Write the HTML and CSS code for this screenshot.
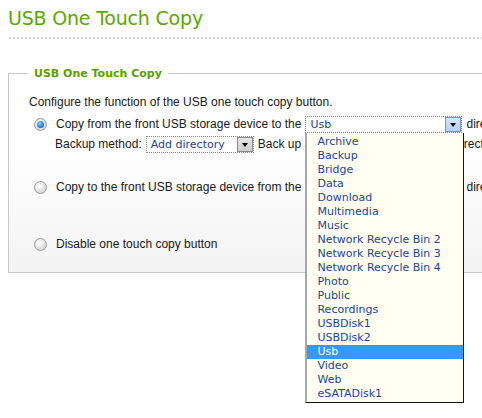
FILE: index.html
```html
<!DOCTYPE html>
<html>
<head>
<meta charset="utf-8">
<link rel="stylesheet" href="styles.css">
</head>
<body>
<div class="page">
  <h1 class="title">USB One Touch Copy</h1>
  <div class="divider"></div>
  <fieldset class="box">
    <legend class="legend">USB One Touch Copy</legend>
    <p class="intro">Configure the function of the USB one touch copy button.</p>

    <div class="option opt1">
      <div class="line">
        <span class="radio checked"></span>
        <span class="label">Copy from the front USB storage device to the</span>
        <span class="select sel-dir">
          <span class="sel-text">Usb</span>
          <span class="arrow blue"></span>
          <div class="list">
            <div class="item">Archive</div>
            <div class="item">Backup</div>
            <div class="item">Bridge</div>
            <div class="item">Data</div>
            <div class="item">Download</div>
            <div class="item">Multimedia</div>
            <div class="item">Music</div>
            <div class="item">Network Recycle Bin 2</div>
            <div class="item">Network Recycle Bin 3</div>
            <div class="item">Network Recycle Bin 4</div>
            <div class="item">Photo</div>
            <div class="item">Public</div>
            <div class="item">Recordings</div>
            <div class="item">USBDisk1</div>
            <div class="item">USBDisk2</div>
            <div class="item active">Usb</div>
            <div class="item">Video</div>
            <div class="item">Web</div>
            <div class="item">eSATADisk1</div>
          </div>
        </span>
        <span class="label">directory.</span>
      </div>
      <div class="line sub">
        <span class="label">Backup method:</span>
        <span class="select sel-method">
          <span class="sel-text">Add directory</span>
          <span class="arrow gray"></span>
        </span>
        <span class="label">Back up all files into the new backup directory.</span>
      </div>
    </div>

    <div class="option opt2">
      <div class="line">
        <span class="radio"></span>
        <span class="label">Copy to the front USB storage device from the</span>
        <span class="select sel-dir">
          <span class="sel-text">Usb</span>
          <span class="arrow blue"></span>
        </span>
        <span class="label">directory.</span>
      </div>
    </div>

    <div class="option opt3">
      <div class="line">
        <span class="radio"></span>
        <span class="label">Disable one touch copy button</span>
      </div>
    </div>
  </fieldset>
</div>
</body>
</html>
```

FILE: styles.css
```css
html {
  overflow: hidden;
  background: #fff;
}

body {
  margin: 0;
  padding: 0;
  background: #fff;
  min-height: 418px;
}

.page {
  width: 620px;
  padding: 5px 0 0 8px;
  font-family: "Liberation Sans", Arial, sans-serif;
  font-size: 12px;
  color: #1a1a1a;
}

.title {
  margin: 0;
  font-family: "DejaVu Sans", Verdana, sans-serif;
  font-weight: normal;
  font-size: 19px;
  line-height: 26px;
  color: #5da800;
  letter-spacing: -0.2px;
}

.divider {
  margin-top: 6px;
  height: 2px;
  width: 100%;
  background-image: radial-gradient(circle, #d2d2d2 0.9px, transparent 1.1px);
  background-size: 4px 2px;
}

.box {
  margin: 28px 0 0 0;
  padding: 15px 20px 18px 20px;
  border: 1px solid #c8c8c8;
  background: linear-gradient(#ffffff 35%, #f3f3f3);
  min-width: 0;
}

.legend {
  margin-left: -1px;
  padding: 0 6px;
  font-family: "DejaVu Sans", Tahoma, sans-serif;
  font-weight: bold;
  font-size: 11px;
  color: #5a9f00;
}

.intro {
  margin: 0 0 4px 0;
  line-height: 15px;
}

.line {
  display: flex;
  align-items: center;
  gap: 4px;
  white-space: nowrap;
  height: 20px;
}

.line .label {
  line-height: 15px;
}

.sub {
  padding-left: 26px;
}

.opt2 {
  margin-top: 23px;
}

.opt3 {
  margin-top: 37px;
}

.radio {
  display: inline-block;
  box-sizing: border-box;
  width: 13px;
  height: 13px;
  margin: 0 5px 0 5px;
  border-radius: 50%;
  border: 1px solid #9a9a9a;
  background: radial-gradient(circle at 40% 35%, #ffffff, #d8d8d8 70%, #c8c8c8);
  position: relative;
  flex: none;
}

.radio.checked::after {
  content: "";
  position: absolute;
  left: 2px;
  top: 2px;
  width: 7px;
  height: 7px;
  border-radius: 50%;
  background: radial-gradient(circle at 40% 35%, #8fd0ff, #2b86d8 55%, #0d4c96);
}

.select {
  position: relative;
  display: inline-flex;
  align-items: center;
  justify-content: space-between;
  box-sizing: border-box;
  height: 17px;
  border: 1px dotted #8a8a8a;
  background: #fff;
  font-family: "DejaVu Sans", Tahoma, sans-serif;
  font-size: 11px;
  color: #23449a;
  flex: none;
}

.sel-text {
  padding-left: 4px;
  line-height: 15px;
}

.sel-dir {
  width: 157px;
}

.sel-method {
  width: 108px;
}

.arrow {
  position: relative;
  box-sizing: border-box;
  width: 16px;
  height: 15px;
  flex: none;
}

.arrow::after {
  content: "";
  position: absolute;
  left: 4px;
  top: 5px;
  border-left: 3.5px solid transparent;
  border-right: 3.5px solid transparent;
  border-top: 4px solid #000;
}

.arrow.blue {
  border: 1px solid #6f98c8;
  background: linear-gradient(#d6e6f8, #b6d0f0);
}

.arrow.gray {
  border: 1px solid #8c8c8c;
  background: linear-gradient(#e4e4e4, #cfcfcf);
}

.list {
  position: absolute;
  left: -1px;
  top: 16px;
  z-index: 10;
  width: 156px;
  padding: 2px 0 1px 0;
  background: #fffff2;
  border-left: 2px solid #a8a8a8;
  border-right: 1px solid #111;
  border-bottom: 1px solid #111;
  font-family: "DejaVu Sans", Tahoma, sans-serif;
  font-size: 11px;
  color: #23449a;
}

.item {
  height: 14px;
  line-height: 14px;
  padding-left: 10px;
  white-space: nowrap;
}

.item.active {
  background: #3399ff;
  color: #fff;
}
```
